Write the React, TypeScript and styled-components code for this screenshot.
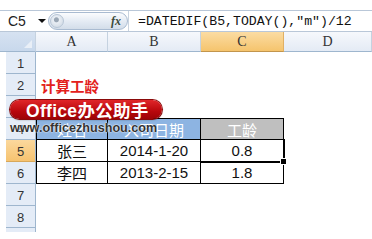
import React from "react";
import styled, { createGlobalStyle, css } from "styled-components";

const Global = createGlobalStyle`
  html, body { margin: 0; padding: 0; background: #fff; }
  body { width: 372px; height: 239px; overflow: hidden; font-family: "Liberation Sans", Arial, sans-serif; }
`;

const Page = styled.div`
  width: 372px;
  height: 239px;
  padding-top: 10px;
  box-sizing: border-box;
  display: flex;
  flex-direction: column;
  background: #fff;
`;

const FormulaBar = styled.div`
  height: 22px;
  display: flex;
  align-items: center;
  border-top: 1px solid #b9c7d8;
  border-bottom: 1px solid #b9c7d8;
  box-sizing: border-box;
`;

const NameBox = styled.div`
  width: 48px;
  display: flex;
  align-items: center;
  padding-left: 8px;
  box-sizing: border-box;
  font-size: 14px;
  color: #222;
  gap: 12px;
`;

const DropArrow = styled.span`
  width: 0;
  height: 0;
  border-left: 4px solid transparent;
  border-right: 4px solid transparent;
  border-top: 4px solid #111;
`;

const FxPill = styled.div`
  width: 80px;
  height: 18px;
  border: 1px solid #a9bbd1;
  border-radius: 10px;
  box-sizing: border-box;
  background: linear-gradient(#fbfcfe, #e3eaf3 55%, #d3dde9);
  display: flex;
  align-items: center;
  justify-content: space-between;
  padding: 0 6px 0 1px;
`;

const Knob = styled.span`
  width: 14px;
  height: 14px;
  border-radius: 50%;
  border: 1px solid #b8c6d6;
  box-sizing: border-box;
  background: radial-gradient(circle at 45% 40%, #9aa7b5 0 2px, #e9eef4 3px, #c9d4e0 100%);
`;

const Fx = styled.span`
  font-family: "Liberation Serif", serif;
  font-style: italic;
  font-weight: bold;
  font-size: 12px;
  color: #3b4a3b;
`;

const FormulaText = styled.div`
  flex: 1;
  padding-left: 9px;
  font-family: "Liberation Mono", monospace;
  font-size: 13.2px;
  color: #111;
  white-space: nowrap;
  border-left: 1px solid #c9d3df;
  height: 100%;
  display: flex;
  align-items: center;
`;

const Sheet = styled.div`
  position: relative;
  display: grid;
  grid-template-columns: 36px 72px 93px 83px 1fr;
  grid-template-rows: 20px repeat(8, 22px) 4px;
`;

const ColHead = styled.div<{ $active?: boolean; $corner?: boolean }>`
  display: flex;
  align-items: center;
  justify-content: center;
  font-family: "Liberation Serif", serif;
  font-size: 14px;
  color: #333;
  border-right: 1px solid #c5d2e0;
  border-bottom: 1px solid #9eb6ce;
  box-sizing: border-box;
  background: linear-gradient(#f6f8fc, #e4ebf5);
  ${(p) =>
    p.$active &&
    css`
      background: linear-gradient(#fbdca3, #f5c46d);
      border-right-color: #e1b064;
      border-bottom-color: #c2954c;
    `}
  ${(p) =>
    p.$corner &&
    css`
      background: linear-gradient(#d6e2f1, #c8d8ec);
      position: relative;
      &::after {
        content: "";
        position: absolute;
        right: 3px;
        bottom: 3px;
        border-left: 8px solid transparent;
        border-bottom: 8px solid #e9eff7;
      }
    `}
`;

const RowHead = styled.div<{ $active?: boolean }>`
  margin-left: 6px;
  display: flex;
  align-items: flex-end;
  justify-content: center;
  padding-bottom: 2px;
  box-sizing: border-box;
  font-size: 13px;
  color: #333;
  background: #e4ecf7;
  border-bottom: 1px solid #9eb6ce;
  border-right: 1px solid #9eb6ce;
  ${(p) =>
    p.$active &&
    css`
      background: linear-gradient(#fbd89d, #f6c370);
      border-bottom-color: #d8a85a;
    `}
`;

const StubHead = styled.div`
  margin-left: 6px;
  background: #e4ecf7;
  border-right: 1px solid #9eb6ce;
`;

const Cell = styled.div`
  box-sizing: border-box;
`;

const Title = styled.div`
  padding-left: 5px;
  display: flex;
  align-items: flex-end;
  padding-bottom: 3px;
  box-sizing: border-box;
  white-space: nowrap;
  font-family: "Noto Sans CJK SC", sans-serif;
  font-weight: bold;
  font-size: 14.5px;
  line-height: 1;
  color: #e3211c;
`;

type Kind = "blue" | "grey" | "plain";

const TCell = styled.div<{ $kind: Kind; $first?: boolean; $top?: boolean; $selected?: boolean }>`
  box-sizing: border-box;
  display: flex;
  align-items: center;
  justify-content: center;
  font-family: "Liberation Sans", "Noto Sans CJK SC", sans-serif;
  font-size: 15px;
  color: #111;
  border-right: 1px solid #000;
  border-bottom: 1px solid #000;
  ${(p) => p.$first && css`border-left: 1px solid #000;`}
  ${(p) => p.$top && css`border-top: 1px solid #000;`}
  ${(p) => p.$kind === "blue" && css`background: #8db4e2; color: #fff;`}
  ${(p) => p.$kind === "grey" && css`background: #bfbfbf; color: #fff;`}
  ${(p) =>
    p.$selected &&
    css`
      position: relative;
      z-index: 1;
      box-shadow: 0 0 0 1px #000, inset 0 0 0 1px #fff;
      &::after {
        content: "";
        position: absolute;
        right: -4px;
        bottom: -4px;
        width: 5px;
        height: 5px;
        background: #000;
        border: 1px solid #fff;
      }
    `}
`;

const Badge = styled.div`
  position: absolute;
  left: 10px;
  top: 68px;
  width: 152px;
  height: 19px;
  border-radius: 10px;
  background: linear-gradient(#e0262a, #b8070c 60%, #9c0307);
  box-shadow: 0 0 0 1px #8a0a0a, 0 1px 2px rgba(0, 0, 0, 0.35);
  display: flex;
  align-items: center;
  padding-left: 16px;
  box-sizing: border-box;
  font-family: "Liberation Sans", "Noto Sans CJK SC", sans-serif;
  font-weight: bold;
  font-size: 17.5px;
  letter-spacing: 0.3px;
  color: #fff;
  white-space: nowrap;
  z-index: 2;
`;

const Url = styled.div`
  position: absolute;
  left: 10px;
  top: 89px;
  font-family: "Liberation Sans", Arial, sans-serif;
  font-weight: bold;
  font-size: 12.6px;
  color: #333;
  text-shadow: 0 0 2px #fff, 0 0 1px #fff;
  white-space: nowrap;
  z-index: 2;
`;

const rows = [1, 2, 3, 4, 5, 6, 7, 8];

const table: Record<number, { text: string; kind: Kind; selected?: boolean }[]> = {
  4: [
    { text: "姓名", kind: "blue" },
    { text: "入司日期", kind: "blue" },
    { text: "工龄", kind: "grey" },
  ],
  5: [
    { text: "张三", kind: "plain" },
    { text: "2014-1-20", kind: "plain" },
    { text: "0.8", kind: "plain", selected: true },
  ],
  6: [
    { text: "李四", kind: "plain" },
    { text: "2013-2-15", kind: "plain" },
    { text: "1.8", kind: "plain" },
  ],
};

export default function App() {
  return (
    <>
      <Global />
      <Page>
        <FormulaBar>
          <NameBox>
            <span>C5</span>
            <DropArrow />
          </NameBox>
          <FxPill>
            <Knob />
            <Fx>fx</Fx>
          </FxPill>
          <FormulaText>=DATEDIF(B5,TODAY(),″m″)/12</FormulaText>
        </FormulaBar>
        <Sheet>
          <ColHead $corner />
          <ColHead>A</ColHead>
          <ColHead>B</ColHead>
          <ColHead $active>C</ColHead>
          <ColHead>D</ColHead>
          {rows.map((r) => (
            <React.Fragment key={r}>
              <RowHead $active={r === 5}>{r}</RowHead>
              {table[r] ? (
                <>
                  {table[r].map((c, i) => (
                    <TCell
                      key={i}
                      $kind={c.kind}
                      $first={i === 0}
                      $top={r === 4}
                      $selected={c.selected}
                    >
                      {c.text}
                    </TCell>
                  ))}
                  <Cell />
                </>
              ) : r === 2 ? (
                <>
                  <Title>计算工龄</Title>
                  <Cell />
                  <Cell />
                  <Cell />
                </>
              ) : (
                <>
                  <Cell />
                  <Cell />
                  <Cell />
                  <Cell />
                </>
              )}
            </React.Fragment>
          ))}
          <StubHead />
          <Badge>Office办公助手</Badge>
          <Url>www.officezhushou.com</Url>
        </Sheet>
      </Page>
    </>
  );
}
